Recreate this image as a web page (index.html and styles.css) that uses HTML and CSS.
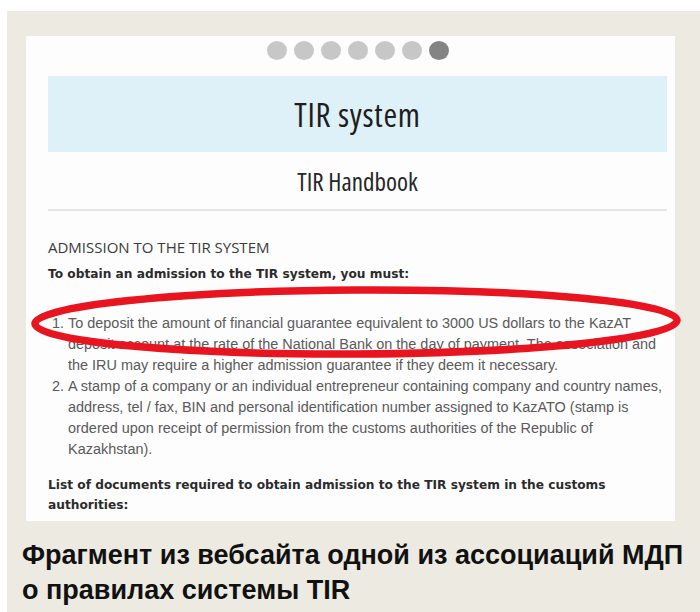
FILE: index.html
```html
<!DOCTYPE html>
<html lang="en">
<head>
<meta charset="utf-8">
<title>TIR system — TIR Handbook</title>
<link rel="stylesheet" href="styles.css">
</head>
<body>
<div class="frame">
  <div class="card">
    <div class="pager">
      <span class="dot"></span><span class="dot"></span><span class="dot"></span><span class="dot"></span><span class="dot"></span><span class="dot"></span><span class="dot active"></span>
    </div>
    <div class="banner"><span class="title">TIR system</span></div>
    <div class="subtitle"><span class="title">TIR Handbook</span></div>
    <h2 class="section">ADMISSION TO THE TIR SYSTEM</h2>
    <p class="lead">To obtain an admission to the TIR system, you must:</p>
    <ol class="steps">
      <li>To deposit the amount of financial guarantee equivalent to 3000 US dollars to the KazAT deposit account at the rate of the National Bank on the day of payment. The association and the IRU may require a higher admission guarantee if they deem it necessary.</li>
      <li>A stamp of a company or an individual entrepreneur containing company and country names, address, tel / fax, BIN and personal identification number assigned to KazATO (stamp is ordered upon receipt of permission from the customs authorities of the Republic of Kazakhstan).</li>
    </ol>
    <p class="lead">List of documents required to obtain admission to the TIR system in the customs authorities:</p>
    <svg class="mark" width="660" height="80" viewBox="0 0 660 80">
      <ellipse cx="328" cy="38" rx="321" ry="32" fill="none" stroke="#e8141f" stroke-width="7.5" transform="rotate(-0.3 328 38)"/>
    </svg>
  </div>
  <p class="caption">Фрагмент из вебсайта одной из ассоциаций МДП о правилах системы TIR</p>
</div>
</body>
</html>
```
FILE: styles.css
```css
html, body {
  margin: 0;
  padding: 0;
  background: #ffffff;
}

.frame {
  margin: 11px 0 0 7px;
  height: 601px;
  background: #edebe1;
  padding: 25px 25px 0 19px;
  box-sizing: border-box;
  overflow: hidden;
}

.card {
  position: relative;
  background: #fdfdfd;
  padding: 5px 8px 12px 22px;
  height: 485px;
  box-sizing: border-box;
}

.pager {
  display: flex;
  justify-content: center;
  gap: 7px;
  height: 20px;
}

.dot {
  width: 20px;
  height: 19px;
  border-radius: 50%;
  background: #c7c7c7;
}

.dot.active {
  background: #848484;
}

.title {
  font-family: "Open Sans", sans-serif;
  font-stretch: 75%;
  font-weight: 500;
}

.banner {
  margin-top: 15px;
  height: 76px;
  background: #dff1f8;
  display: flex;
  align-items: center;
  justify-content: center;
  color: #1e1e1e;
}

.banner .title {
  font-size: 33px;
  letter-spacing: 0.7px;
}

.subtitle {
  height: 57px;
  border-bottom: 2px solid #e6e6e6;
  display: flex;
  align-items: center;
  justify-content: center;
  font-size: 25px;
  color: #262626;
}

.section {
  margin: 27px 0 0;
  font-family: "Open Sans", sans-serif;
  font-weight: 400;
  font-size: 15px;
  color: #3a3a3a;
  line-height: 18px;
}

.lead {
  margin: 8px 0 0;
  font-family: "DejaVu Sans", sans-serif;
  font-weight: 700;
  font-size: 12.2px;
  line-height: 20px;
  color: #2b2b2b;
}

.steps {
  margin: 29px -4px 0 0;
  padding-left: 20px;
  font-family: "Liberation Sans", Arial, sans-serif;
  font-size: 14.45px;
  line-height: 21px;
  color: #5a5a5a;
}

.steps + .lead {
  margin-top: 15px;
}

.mark {
  position: absolute;
  left: 2px;
  top: 248px;
  pointer-events: none;
}

.caption {
  margin: 17px -30px 0 -4px;
  font-family: "Liberation Sans", Arial, sans-serif;
  font-weight: 700;
  font-size: 27px;
  line-height: 35px;
  color: #111;
}
```
